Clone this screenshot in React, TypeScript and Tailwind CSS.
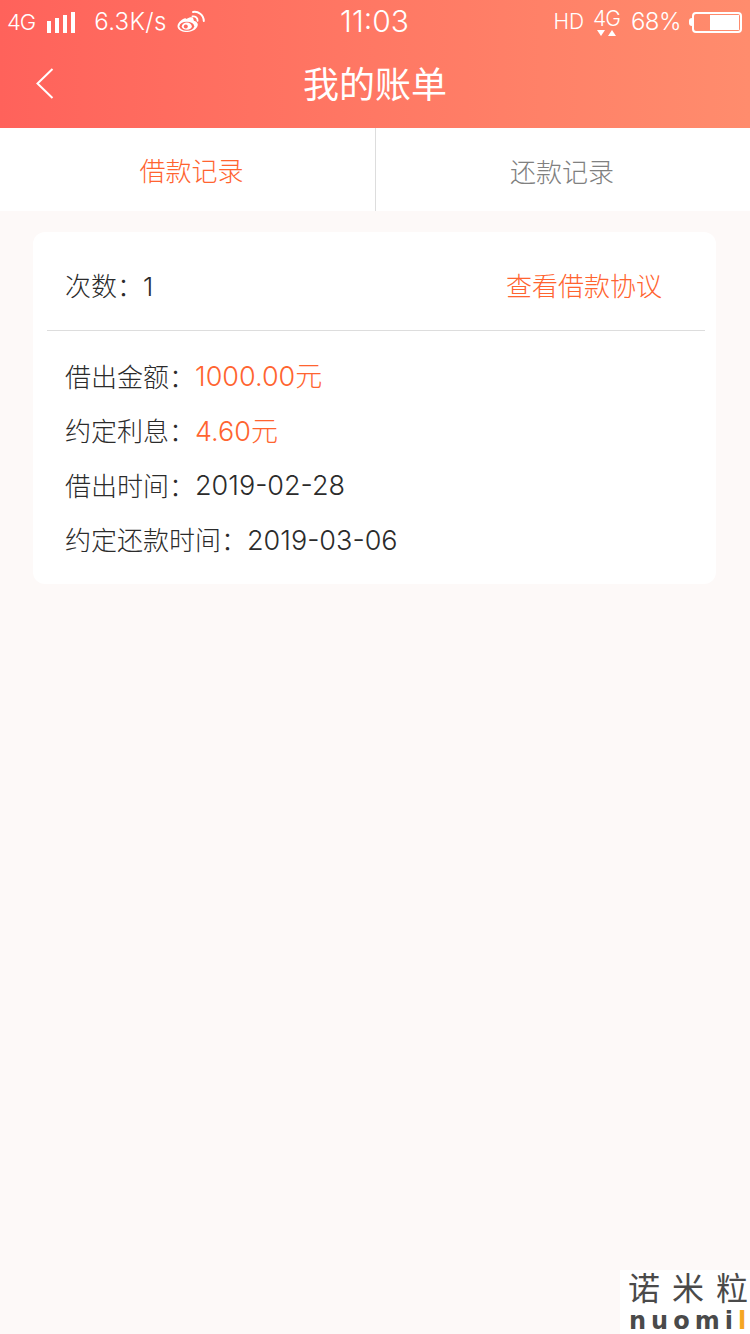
const sans = "font-['Inter','Noto_Sans_CJK_SC',sans-serif]";
const colon = "\uFF1A";

function WeiboIcon() {
  return (
    <svg width="29" height="24" viewBox="0 0 29 24" fill="none" className="ml-[10px] mt-[-1px]">
      <path
        d="M9.500 9c3.500-2.200 6.400-2.300 7 .2.200 1 .1 1.400 1 1.700 2 .6 3.300 1.900 3.300 3.700 0 3.800-5 7.400-10.300 7.400C5 22 .5 19.900.5 16.200c0-1.900 1.200-3.600 3.200-5.400C6 8.800 8.400 7.300 9.500 9z"
        fill="white"
      />
      <ellipse cx="9.800" cy="16.200" rx="7.400" ry="4.500" fill="#ff6a5d" />
      <ellipse cx="9.800" cy="16.200" rx="5" ry="3.600" fill="white" />
      <circle cx="8.800" cy="16.600" r="2" fill="#ff6a5d" />
      <path d="M15.500 6.500c2.600-.6 5.300 1 5.100 4.300" stroke="white" strokeWidth="1.800" strokeLinecap="round" />
      <path d="M16 2c5-1 10.600 2.600 10.800 9" stroke="white" strokeWidth="2" strokeLinecap="round" />
    </svg>
  );
}

function StatusBar() {
  return (
    <div className={`flex h-[44px] items-center text-white ${sans} font-light`}>
      <div className="flex flex-1 items-center pl-[7px]">
        <span className="text-[22px] tracking-[-1px]">4G</span>
        <div className="ml-[12px] flex items-end gap-[4px]">
          <div className="h-[12px] w-[4px] bg-white" />
          <div className="h-[15px] w-[4px] bg-white" />
          <div className="h-[18px] w-[4px] bg-white" />
          <div className="h-[21px] w-[4px] bg-white" />
        </div>
        <span className="ml-[19px] text-[24px] leading-[32px] tracking-[0.3px]">6.3K/s</span>
        <WeiboIcon />
      </div>
      <span className="mb-[2px] text-[30px]">11:03</span>
      <div className="flex flex-1 items-center justify-end pr-[8px]">
        <span className="text-[21px]">HD</span>
        <div className="ml-[9px] flex flex-col items-center">
          <span className="text-[21px] leading-[20px] tracking-[-1px]">4G</span>
          <div className="mt-[1px] flex gap-[3px]">
            <div className="h-0 w-0 border-x-[4px] border-t-[6px] border-x-transparent border-t-white" />
            <div className="h-0 w-0 border-x-[4px] border-b-[6px] border-x-transparent border-b-white" />
          </div>
        </div>
        <span className="ml-[11px] text-[24px] tracking-[-0.5px]">68%</span>
        <div className="ml-[8px] h-[8px] w-[3px] rounded-l-full bg-white" />
        <div className="flex h-[21px] w-[50px] justify-end rounded-[4px] border-2 border-white p-[1px]">
          <div className="h-full w-[29px] bg-white" />
        </div>
      </div>
    </div>
  );
}

function Header() {
  return (
    <div className="h-[128px] bg-gradient-to-r from-[#ff625b] to-[#ff8c6d]">
      <StatusBar />
      <div className="relative flex h-[84px] items-center justify-center pb-[2px]">
        <svg width="20" height="32" viewBox="0 0 20 32" fill="none" className="absolute left-[35px] top-[23px]">
          <path d="M17.500 2 2.500 16.500 17.500 31" stroke="white" strokeWidth="2" />
        </svg>
        <span className={`text-[36px] font-normal text-white ${sans}`}>我的账单</span>
      </div>
    </div>
  );
}

function Row({ label, value, orange }: { label: string; value: string; orange?: boolean }) {
  return (
    <div className="flex h-[54.500px] items-center text-[26px] text-[#2b2b2b]">
      <span>
        {label}
        {colon}
      </span>
      <span className={`text-[27px] ${orange ? "text-[#ff6430]" : ""}`}>{value}</span>
    </div>
  );
}

export default function App() {
  return (
    <div className={`relative min-h-[1334px] bg-[#fdf9f8] font-light ${sans}`}>
      <Header />
      <div className="flex h-[83px] bg-white">
        <div className="flex w-[376px] items-center justify-center border-r border-[#dddddd] pl-[8px] pt-[3px] text-[26px] text-[#ff6430]">
          借款记录
        </div>
        <div className="flex w-[374px] items-center justify-center pr-[2px] pt-[6px] text-[26px] text-[#808080]">
          还款记录
        </div>
      </div>
      <div className="mx-[33px] mt-[21px] h-[352px] w-[683px] rounded-[12px] bg-white pl-[14px] pr-[11px]">
        <div className="flex h-[99px] items-center justify-between border-b border-[#dddddd] pl-[18px] pr-[43px] pt-[10px] text-[26px]">
          <span className="text-[#2b2b2b]">
            次数{colon}1
          </span>
          <span className="text-[#ff6430]">查看借款协议</span>
        </div>
        <div className="pl-[18px] pt-[19px]">
          <Row label="借出金额" value="1000.00元" orange />
          <Row label="约定利息" value="4.60元" orange />
          <Row label="借出时间" value="2019-02-28" />
          <Row label="约定还款时间" value="2019-03-06" />
        </div>
      </div>
      <div className="absolute bottom-0 right-0 flex h-[64px] w-[130px] flex-col bg-white font-normal">
        <div className="flex h-[40px] justify-between pl-[8px] pr-[2px] text-[32px] leading-[38px] text-[#4a4a4a]">
          <span>诺</span>
          <span>米</span>
          <span>粒</span>
        </div>
        <span className="h-[24px] whitespace-nowrap pl-[9px] font-['DejaVu_Sans',sans-serif] text-[24px] font-bold leading-[22px] tracking-[5px] text-[#4a4a4a]">
          nuomi<span className="tracking-normal text-[#f5a623]">l</span>
        </span>
      </div>
    </div>
  );
}
